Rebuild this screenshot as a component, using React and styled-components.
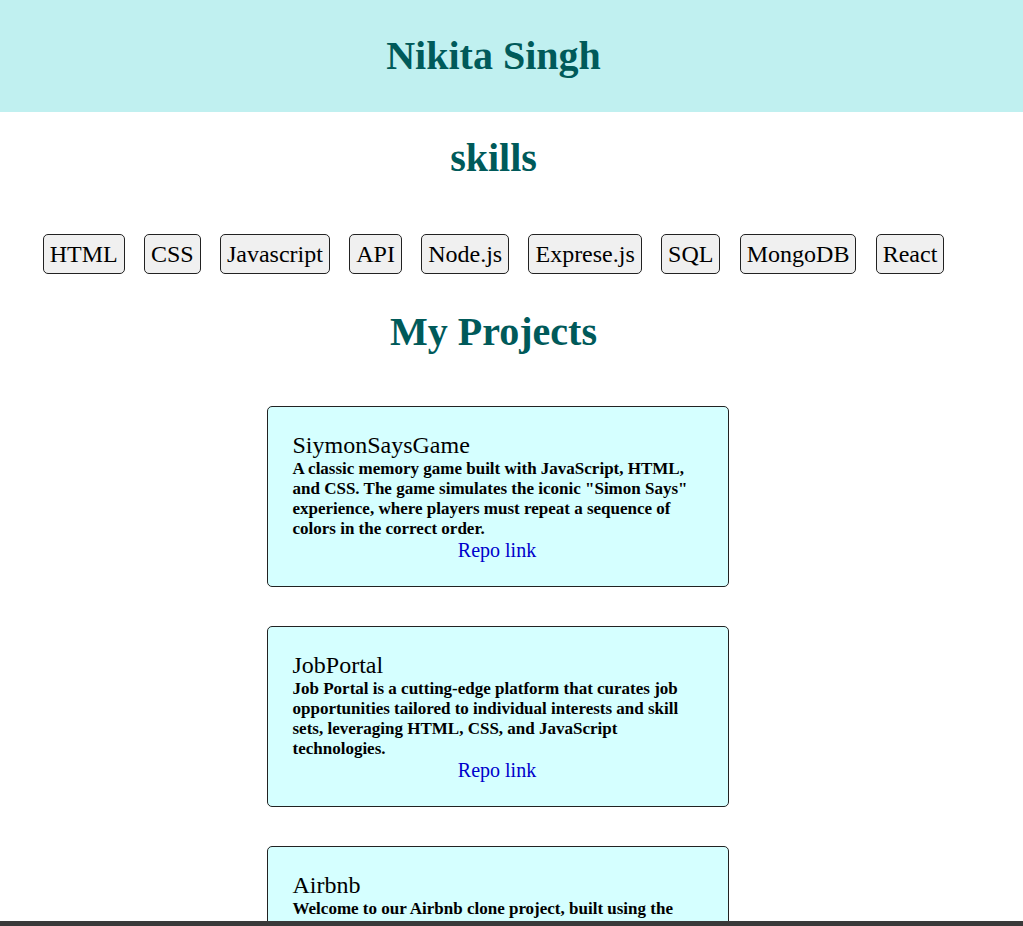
import React from 'react';
import styled, { createGlobalStyle } from 'styled-components';

const GlobalStyle = createGlobalStyle`
  body {
    margin: 0;
    background: #fff;
    font-family: "Liberation Serif", "Times New Roman", serif;
    color: #000;
  }
`;

const Header = styled.header`
  background-color: #c0f0f0;
  padding: 33px 0;
`;

const Name = styled.h1`
  width: 987px;
  margin: 0;
  text-align: center;
  font-size: 40px;
  line-height: 46px;
  color: #005a5a;
`;

const Main = styled.main`
  width: 987px;
`;

const SectionTitle = styled.h2`
  margin: 0;
  text-align: center;
  font-size: 40px;
  line-height: 46px;
  color: #005a5a;
`;

const SkillsTitle = styled(SectionTitle)`
  margin-top: 23px;
`;

const ProjectsTitle = styled(SectionTitle)`
  margin-top: 35px;
`;

const SkillList = styled.div`
  display: flex;
  justify-content: center;
  gap: 19.3px;
  margin-top: 53px;
`;

const Skill = styled.button`
  font-family: "Liberation Serif", "Times New Roman", serif;
  font-size: 24px;
  line-height: 28px;
  padding: 5px 6px;
  background: #f0f0f0;
  border: 1px solid #222;
  border-radius: 5px;
  color: #000;
`;

const ProjectList = styled.div`
  display: flex;
  flex-direction: column;
  align-items: center;
  gap: 39px;
  margin-top: 51px;
  padding-left: 8px;
  padding-bottom: 40px;
`;

const Card = styled.div`
  box-sizing: border-box;
  width: 462px;
  padding: 24px 26px 24px 25px;
  background: #d5ffff;
  border: 1px solid #222;
  border-radius: 5px;
`;

const ProjectName = styled.h3`
  margin: 0;
  font-size: 24px;
  font-weight: normal;
  line-height: 28px;
`;

const Description = styled.p`
  margin: 0;
  font-size: 17px;
  font-weight: bold;
  line-height: 20px;
`;

const RepoLink = styled.a`
  display: block;
  text-align: center;
  font-size: 20px;
  line-height: 23px;
  color: #0000cc;
  text-decoration: none;
`;

const BottomBar = styled.div`
  position: fixed;
  left: 0;
  right: 0;
  bottom: 0;
  height: 5px;
  background: #3a3a3a;
`;

const skills = ['HTML', 'CSS', 'Javascript', 'API', 'Node.js', 'Exprese.js', 'SQL', 'MongoDB', 'React'];

const projects = [
  {
    name: 'SiymonSaysGame',
    text: 'A classic memory game built with JavaScript, HTML, and CSS. The game simulates the iconic "Simon Says" experience, where players must repeat a sequence of colors in the correct order.',
  },
  {
    name: 'JobPortal',
    text: 'Job Portal is a cutting-edge platform that curates job opportunities tailored to individual interests and skill sets, leveraging HTML, CSS, and JavaScript technologies.',
  },
  {
    name: 'Airbnb',
    text: 'Welcome to our Airbnb clone project, built using the MERN stack. It lets users browse, create and review listings with a clean and simple interface.',
  },
];

const App = () => {
  return (
    <>
      <GlobalStyle />
      <Header>
        <Name>Nikita Singh</Name>
      </Header>
      <Main>
        <SkillsTitle>skills</SkillsTitle>
        <SkillList>
          {skills.map((s) => (
            <Skill key={s}>{s}</Skill>
          ))}
        </SkillList>
        <ProjectsTitle>My Projects</ProjectsTitle>
        <ProjectList>
          {projects.map((p) => (
            <Card key={p.name}>
              <ProjectName>{p.name}</ProjectName>
              <Description>{p.text}</Description>
              <RepoLink href="#">Repo link</RepoLink>
            </Card>
          ))}
        </ProjectList>
      </Main>
      <BottomBar />
    </>
  );
};

export default App;
